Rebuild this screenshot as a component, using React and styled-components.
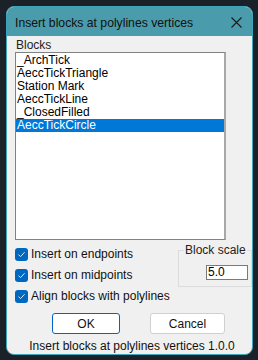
import React from "react";
import styled, { createGlobalStyle } from "styled-components";

const Global = createGlobalStyle`
  html, body { margin: 0; padding: 0; background: #1b2128; }
  body { font-family: "Liberation Sans", Arial, sans-serif; }
  * { box-sizing: border-box; }
`;

const Screen = styled.div`
  width: 258px;
  height: 360px;
  background: #1b2128;
  padding: 6px 5px 5px 6px;
`;

const Window = styled.div`
  width: 247px;
  height: 349px;
  border: 1px solid #3aa6b8;
  border-radius: 8px;
  overflow: hidden;
  background: #f0f0f0;
  display: flex;
  flex-direction: column;
`;

const TitleBar = styled.div`
  height: 29px;
  background: #4a9bab;
  display: flex;
  align-items: center;
  justify-content: space-between;
  padding: 0 10px 0 8px;
  flex: none;
`;

const Title = styled.div`
  font-family: "Liberation Sans", Arial, sans-serif;
  font-size: 12.2px;
  color: #111;
  margin-top: 2px;
`;

const Close = styled.svg`
  width: 11px;
  height: 11px;
  margin-top: 2px;
`;

const Body = styled.div`
  flex: 1;
  display: flex;
  flex-direction: column;
  padding: 3px 0 0 8px;
  font-size: 12px;
  color: #000;
`;

const Label = styled.div`
  height: 13px;
  line-height: 13px;
  padding-left: 1px;
  color: #222;
`;

const ListBox = styled.div`
  width: 211px;
  height: 188px;
  background: #fff;
  border: 1px solid #828282;
  border-right: 2px solid #a8a8a8;
  padding: 1px 0 0 0;
`;

const Item = styled.div`
  height: 13px;
  line-height: 13px;
  padding-left: 1px;
  background: ${(p) => (p.$selected ? "#0078d7" : "transparent")};
  color: ${(p) => (p.$selected ? "#fff" : "#000")};
`;

const Options = styled.div`
  display: flex;
  margin-top: 8px;
`;

const Checks = styled.div`
  width: 163px;
  display: flex;
  flex-direction: column;
`;

const CheckRow = styled.div`
  height: 21px;
  display: flex;
  align-items: flex-start;
  gap: 3px;
`;

const Box = styled.span`
  width: 13px;
  height: 13px;
  border-radius: 3px;
  background: #0067c0;
  display: flex;
  align-items: center;
  justify-content: center;
  flex: none;
`;

const CheckText = styled.span`
  line-height: 13px;
  color: #111;
`;

const Group = styled.fieldset`
  margin: -5px 0 0 0;
  width: 74px;
  height: 44px;
  border: 1px solid #dcdcdc;
  display: flex;
  justify-content: flex-end;
  align-items: flex-start;
  padding: 8px 3px 0 0;
`;

const Legend = styled.legend`
  padding: 0 1px;
  margin-left: 5px;
  font-size: 12px;
  color: #222;
`;

const Input = styled.div`
  width: 42px;
  height: 15px;
  background: #fff;
  border: 1px solid #7a7a7a;
  line-height: 13px;
  padding-left: 1px;
  font-size: 12px;
`;

const Buttons = styled.div`
  display: flex;
  gap: 30px;
  margin: 2px 0 0 37px;
`;

const Button = styled.button`
  height: 21px;
  width: ${(p) => p.$w}px;
  background: #fff;
  border: 1px solid ${(p) => (p.$default ? "#0067c0" : "#d0d0d0")};
  border-radius: 3px;
  font-family: "Liberation Sans", Arial, sans-serif;
  font-size: 12px;
  color: #111;
  padding: 0;
`;

const Footer = styled.div`
  text-align: center;
  margin: 5px 0 0 -6px;
  padding-left: 3px;
  line-height: 14px;
  color: #111;
  font-size: 12px;
`;

const items = [
  "_ArchTick",
  "AeccTickTriangle",
  "Station Mark",
  "AeccTickLine",
  "_ClosedFilled",
  "AeccTickCircle",
];

const Check = () => (
  <Box>
    <svg width="9" height="9" viewBox="0 0 9 9">
      <path d="M1.5 4.6 L3.6 6.6 L7.6 2.2" fill="none" stroke="#d6e6f6" strokeWidth="1" />
    </svg>
  </Box>
);

export default function App() {
  return (
    <Screen>
      <Global />
      <Window>
        <TitleBar>
          <Title>Insert blocks at polylines vertices</Title>
          <Close viewBox="0 0 11 11">
            <path d="M0.5 0.5 L10.5 10.5 M10.5 0.5 L0.5 10.5" stroke="#1a1a1a" strokeWidth="1.1" />
          </Close>
        </TitleBar>
        <Body>
          <Label>Blocks</Label>
          <ListBox>
            {items.map((t, i) => (
              <Item key={t} $selected={i === 5}>{t}</Item>
            ))}
          </ListBox>
          <Options>
            <Checks>
              <CheckRow><Check /><CheckText>Insert on endpoints</CheckText></CheckRow>
              <CheckRow><Check /><CheckText>Insert on midpoints</CheckText></CheckRow>
              <CheckRow><Check /><CheckText>Align blocks with polylines</CheckText></CheckRow>
            </Checks>
            <Group>
              <Legend>Block scale</Legend>
              <Input>5.0</Input>
            </Group>
          </Options>
          <Buttons>
            <Button $w={68} $default>OK</Button>
            <Button $w={75}>Cancel</Button>
          </Buttons>
          <Footer>Insert blocks at polylines vertices 1.0.0</Footer>
        </Body>
      </Window>
    </Screen>
  );
}
